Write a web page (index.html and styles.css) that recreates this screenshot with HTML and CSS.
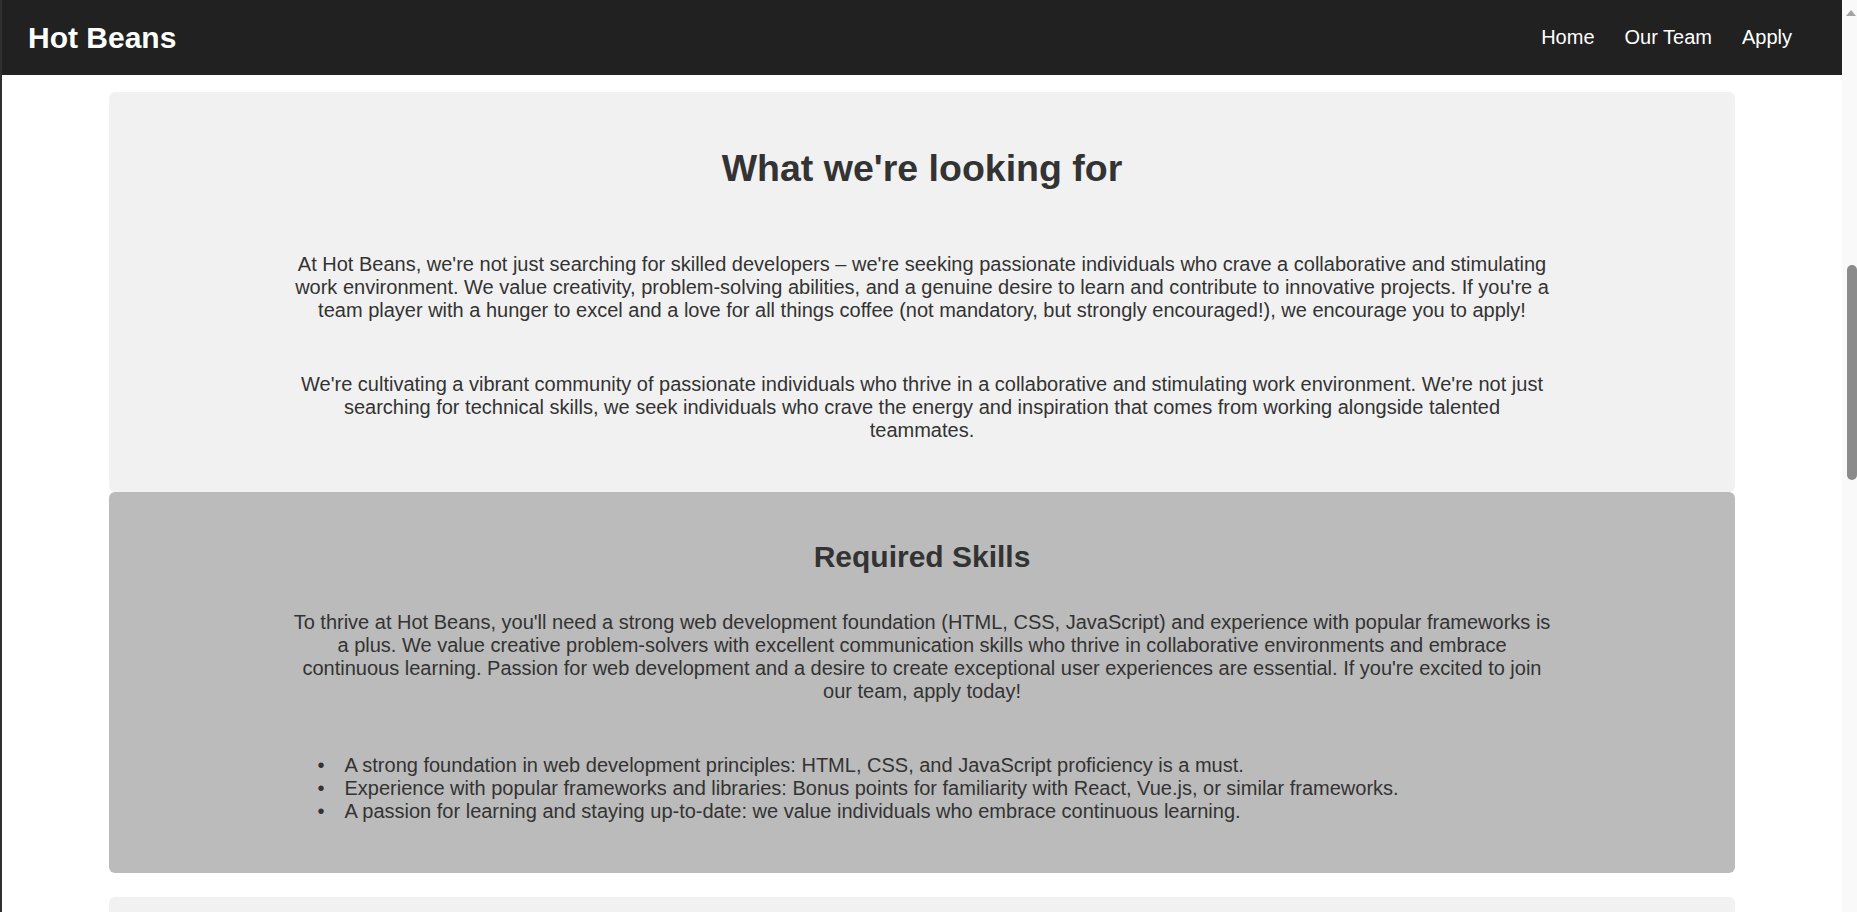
FILE: index.html
```html
<!DOCTYPE html>
<html lang="en">
<head>
<meta charset="utf-8">
<title>Hot Beans - Apply</title>
<link rel="stylesheet" href="styles.css">
</head>
<body>
<div class="window">
  <div class="page">
    <header class="navbar">
      <div class="logo">Hot Beans</div>
      <nav>
        <ul class="nav-links">
          <li><a href="#">Home</a></li>
          <li><a href="#">Our Team</a></li>
          <li><a href="#">Apply</a></li>
        </ul>
      </nav>
    </header>
    <main class="content">
      <section class="card card-light">
        <div class="inner">
          <h1 class="title">What we're looking for</h1>
          <p>At Hot Beans, we're not just searching for skilled developers – we're seeking passionate individuals who crave a collaborative and stimulating work environment. We value creativity, problem-solving abilities, and a genuine desire to learn and contribute to innovative projects. If you're a team player with a hunger to excel and a love for all things coffee (not mandatory, but strongly encouraged!), we encourage you to apply!</p>
          <p>We're cultivating a vibrant community of passionate individuals who thrive in a collaborative and stimulating work environment. We're not just searching for technical skills, we seek individuals who crave the energy and inspiration that comes from working alongside talented teammates.</p>
        </div>
      </section>
      <section class="card card-dark">
        <div class="inner">
          <h2 class="subtitle">Required Skills</h2>
          <p>To thrive at Hot Beans, you'll need a strong web development foundation (HTML, CSS, JavaScript) and experience with popular frameworks is a plus. We value creative problem-solvers with excellent communication skills who thrive in collaborative environments and embrace continuous learning. Passion for web development and a desire to create exceptional user experiences are essential. If you're excited to join our team, apply today!</p>
          <ul class="skills">
            <li>A strong foundation in web development principles: HTML, CSS, and JavaScript proficiency is a must.</li>
            <li>Experience with popular frameworks and libraries: Bonus points for familiarity with React, Vue.js, or similar frameworks.</li>
            <li>A passion for learning and staying up-to-date: we value individuals who embrace continuous learning.</li>
          </ul>
        </div>
      </section>
      <section class="card card-light card-next"></section>
    </main>
  </div>
  <div class="scrollbar">
    <div class="arrow-up"></div>
    <div class="thumb"></div>
  </div>
</div>
</body>
</html>
```

FILE: styles.css
```css
* {
  box-sizing: border-box;
}

html,
body {
  margin: 0;
  padding: 0;
  height: 100%;
  overflow: hidden;
}

body {
  font-family: "Liberation Sans", Arial, sans-serif;
  color: #333333;
  background: #ffffff;
}

.window {
  display: flex;
  height: 100%;
}

.page {
  flex: 1;
  min-width: 0;
  border-left: 2px solid #303030;
  overflow: hidden;
}

.navbar {
  height: 75px;
  background: #212121;
  display: flex;
  align-items: center;
  justify-content: space-between;
  padding: 0 50px 0 26px;
}

.logo {
  color: #ffffff;
  font-weight: bold;
  font-size: 30px;
}

.nav-links {
  list-style: none;
  display: flex;
  gap: 30px;
  margin: 0 0 1px;
  padding: 0;
}

.nav-links a {
  color: #ffffff;
  text-decoration: none;
  font-size: 20px;
}

.content {
  padding: 17px 107px 0;
}

.card {
  border-radius: 6px;
}

.card-light {
  background: #f1f1f1;
}

.card-dark {
  background: #bbbbbb;
}

.inner {
  max-width: 1265px;
  margin: 0 auto;
  text-align: center;
  font-size: 20px;
}

.card-light:first-child {
  padding: 55px 0 50px;
}

.card-dark {
  padding: 48px 0 50px;
}

.card-next {
  margin-top: 24px;
  height: 200px;
}

.title {
  font-size: 37.5px;
  margin: 0 0 63px;
}

.subtitle {
  font-size: 30px;
  margin: 0 0 37px;
}

.inner p {
  margin: 0;
}

.inner p + p {
  margin-top: 51px;
}

.skills {
  text-align: left;
  margin: 51px 0 0;
  padding-left: 55px;
}

.skills li::marker {
  content: "\2022\2002\2002";
}

.scrollbar {
  width: 15px;
  flex: none;
  background: #f9f9f9;
  display: flex;
  flex-direction: column;
  align-items: flex-end;
}

.arrow-up {
  margin-top: 10px;
  margin-right: 1px;
  width: 0;
  height: 0;
  border-left: 5px solid transparent;
  border-right: 5px solid transparent;
  border-bottom: 6px solid #a3a3a3;
}

.thumb {
  margin-top: 249px;
  width: 10px;
  height: 215px;
  border-radius: 5px;
  background: #8b8b8b;
}
```
